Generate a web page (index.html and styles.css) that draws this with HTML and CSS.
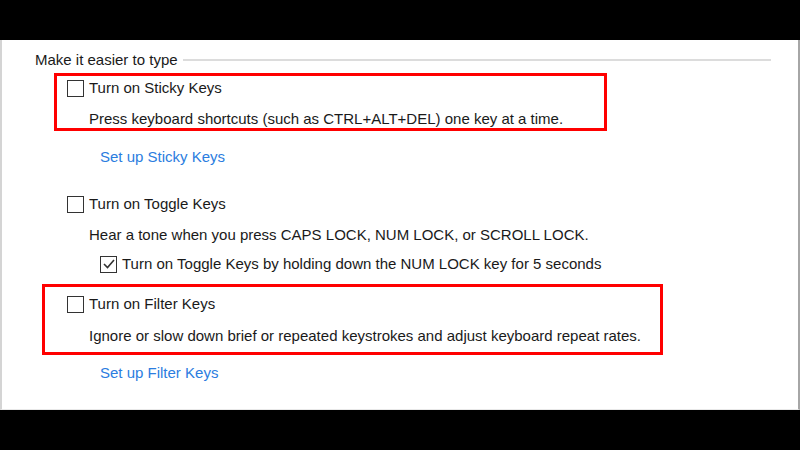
FILE: index.html
```html
<!DOCTYPE html>
<html lang="en">
<head>
    <meta charset="UTF-8">
    <meta name="viewport" content="width=device-width, initial-scale=1.0">
    <title>Make it easier to type</title>
    <link rel="stylesheet" href="styles.css">
</head>
<body>
    <div class="bar"></div>

    <div class="panel">
        <div class="group-title">
            <span>Make it easier to type</span>
            <span class="rule"></span>
        </div>

        <div class="highlight sticky">
            <label class="option">
                <span class="box"></span>
                Turn on Sticky Keys
            </label>
            <p class="desc">Press keyboard shortcuts (such as CTRL+ALT+DEL) one key at a time.</p>
        </div>

        <a class="link" href="#">Set up Sticky Keys</a>

        <div class="plain">
            <label class="option">
                <span class="box"></span>
                Turn on Toggle Keys
            </label>
            <p class="desc">Hear a tone when you press CAPS LOCK, NUM LOCK, or SCROLL LOCK.</p>
            <label class="option sub">
                <span class="box">
                    <svg viewBox="0 0 14 14" width="14" height="14">
                        <polyline points="2,7 5.5,10.5 12,3" fill="none" stroke="#333" stroke-width="1.6"/>
                    </svg>
                </span>
                Turn on Toggle Keys by holding down the NUM LOCK key for 5 seconds
            </label>
        </div>

        <div class="highlight filter">
            <label class="option">
                <span class="box"></span>
                Turn on Filter Keys
            </label>
            <p class="desc">Ignore or slow down brief or repeated keystrokes and adjust keyboard repeat rates.</p>
        </div>

        <a class="link" href="#">Set up Filter Keys</a>
    </div>

    <div class="bar"></div>
</body>
</html>
```

FILE: styles.css
```css
body {
    margin: 0;
    background-color: #000;
    font-family: "Liberation Sans", Arial, sans-serif;
    font-size: 15px;
    color: #1a1a1a;
}
.bar {
    height: 40px;
    background-color: #000;
}
.panel {
    height: 370px;
    box-sizing: border-box;
    background-color: #fff;
    border-left: 2px solid #d4d4d4;
    border-right: 2px solid #a6a6a6;
    border-bottom: 1px solid #e8e8e8;
    overflow: hidden;
}
.group-title {
    display: flex;
    align-items: center;
    margin: 10px 27px 0 33px;
    line-height: 20px;
    white-space: nowrap;
}
.rule {
    flex: 1;
    height: 2px;
    margin-left: 5px;
    background-color: #dcdcdc;
}
.highlight {
    box-sizing: border-box;
    border: 3px solid #ff0000;
}
.sticky {
    width: 553px;
    height: 58px;
    margin: 3px 0 0 52px;
    padding: 2px 0 0 10px;
}
.filter {
    width: 621px;
    height: 71px;
    margin: 10px 0 0 40px;
    padding: 7px 0 0 22px;
}
.filter .desc {
    margin-top: 12px;
}
.option {
    display: flex;
    align-items: center;
    height: 20px;
    line-height: 20px;
    white-space: nowrap;
}
.box {
    display: flex;
    align-items: center;
    justify-content: center;
    width: 17px;
    height: 17px;
    box-sizing: border-box;
    border: 1.5px solid #333;
    margin-right: 5px;
    background-color: #fff;
}
.desc {
    margin: 11px 0 0 22px;
    line-height: 20px;
    white-space: nowrap;
}
.sub {
    margin: 9px 0 0 33px;
}
.plain {
    margin: 27px 0 0 65px;
}
.link {
    display: block;
    width: max-content;
    margin: 16px 0 0 98px;
    line-height: 20px;
    color: #2b7de0;
    text-decoration: none;
}
.filter + .link {
    margin-top: 8px;
}
```
